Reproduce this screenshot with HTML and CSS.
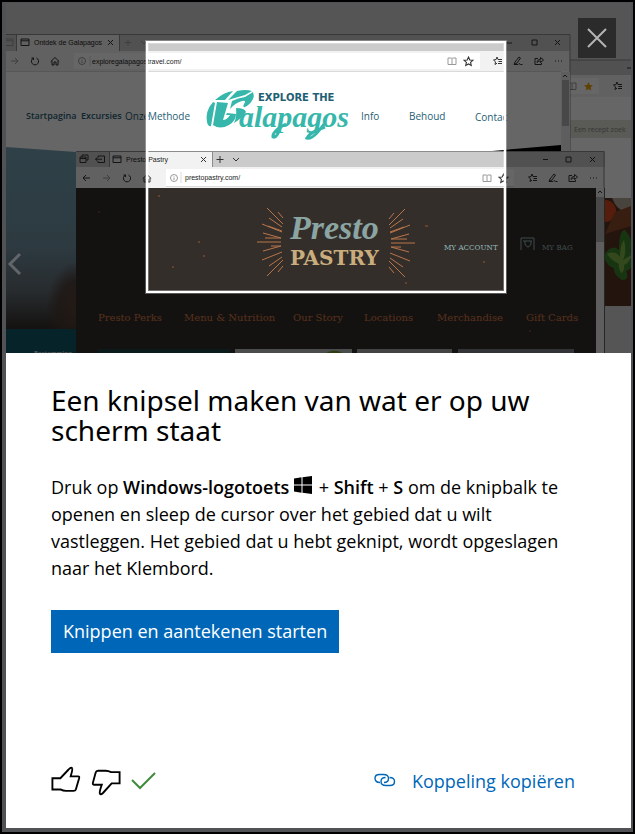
FILE: index.html
```
<!DOCTYPE html>
<html lang="nl">
<head>
  <meta charset="UTF-8" />
  <meta name="viewport" content="width=device-width, initial-scale=1.0"/>
  <title>Een knipsel maken</title>
  <link rel="stylesheet" href="styles.css">
</head>
<body>

<div class="dialog">
  <!-- Illustration -->
  <div class="hero">
    <svg class="hero-art" viewBox="6 3 625 350" role="img" aria-label="Schermknipsel van browservensters">
      <defs>
        <linearGradient id="sea" x1="0" y1="0" x2="0" y2="1">
          <stop offset="0" stop-color="#76a2b4"/>
          <stop offset=".55" stop-color="#7192a2"/>
          <stop offset=".8" stop-color="#626c73"/>
          <stop offset="1" stop-color="#342d29"/>
        </linearGradient>
        <radialGradient id="rock">
          <stop offset="0" stop-color="#5d4234"/>
          <stop offset=".6" stop-color="#4c3a32" stop-opacity=".8"/>
          <stop offset="1" stop-color="#4c3a32" stop-opacity="0"/>
        </radialGradient>
        <clipPath id="photo"><path d="M6 147L76 152V329H6z"/></clipPath>
        <clipPath id="food"><path d="M605 198h26v108h-26z"/></clipPath>
        <symbol id="star" viewBox="0 0 10 10"><path d="M5 1l1.200 2.600 2.800.300-2.100 1.900.600 2.800L5 7.200 2.500 8.600l.600-2.800L1 3.900l2.800-.300z"/></symbol>
        <symbol id="fav" viewBox="0 0 10 10"><path d="M4 1l1 2.500H9M4 1L3 3.600.500 4l2 1.800L2 8.500l2-1.300M5.500 5.500H9M5 7.500h4"/></symbol>
        <symbol id="pen" viewBox="0 0 10 10"><path d="M1 8.500L2 6l4-5 1.500 1-3.500 5zM1 8.500h4l1-1 1.500 1H9.500"/></symbol>
        <symbol id="share" viewBox="0 0 10 10"><path d="M4 2.500H1v6h6.500V7M3 6.500c0-2 1.500-3 3.500-3V1.500l3 2.500-3 2.500V5C5 5 4 5.500 3 6.500z"/></symbol>
        <symbol id="book" viewBox="0 0 10 10"><path d="M1 2h3.500l.500.500.500-.500H9v6.500H1zM5 2.500v6"/></symbol>
        <symbol id="page" viewBox="0 0 10 10"><path d="M1 2h8v6.500H1zM1 3.800h8"/></symbol>
        <symbol id="reload" viewBox="0 0 10 10"><path d="M3.500 2A3.600 3.600 0 1 0 6.500 2M3.500 2H1.500M3.500 2v2"/></symbol>
        <symbol id="home" viewBox="0 0 10 10"><path d="M.800 5.500L5 1.500l4.200 4M2 4.800V9h2V6h2v3h2V4.800"/></symbol>
        <symbol id="info" viewBox="0 0 10 10"><circle cx="5" cy="5" r="3.500"/><path d="M5 4.500V7M5 3v.600"/></symbol>
        <symbol id="windows" viewBox="0 0 10 10"><path d="M3 3V1h6v5H7M1 3h6v5.500H1zM1 4.500h6"/></symbol>
        <symbol id="aside" viewBox="0 0 10 10"><path d="M3 3.500V2h6.500v6.500H3V7M.500 5.200H7M2.500 3.500L.500 5.200 2.500 7"/></symbol>
      </defs>

      <path class="desk" d="M6 3h625v350H6z"/>

      <!-- Recipe window -->
      <path class="page" d="M560 60h71v293h-71z"/>
      <path class="titlebar" d="M560 60h71v15h-71z"/>
      <path class="toolbar" d="M560 75h71v22h-71z"/>
      <path class="field" d="M560 78h39v16h-39z"/>
      <path class="edge" d="M560 60h71"/>
      <path class="line" d="M627 68h4"/>
      <use class="line pale" href="#book" x="567" y="81" width="10" height="10"/>
      <use class="gold" href="#star" x="583" y="81" width="11" height="11"/>
      <use class="line" href="#fav" x="613" y="81" width="10" height="10"/>
      <path fill="#e0e0d8" d="M560 120h71v18h-71z"/>
      <text class="hint" x="574" y="132">Een recept zoek</text>
      <g clip-path="url(#food)">
        <path fill="#5a3423" d="M600 190h40v120h-40z"/>
        <circle cx="605" cy="211" r="11" fill="#d7481e"/>
        <path fill="#b5a89a" d="M612 198h19v10q-12 8-19-10z"/>
        <path fill="#8a4b2c" d="M615 212l16-6v20l-26 8z"/>
        <path fill="#3e842c" d="M604 255q8-12 15-5 0-20 6-20 9 10 5 22 5-4 6 5-5 14-10 14 4 9-4 9-9-6-8-12-8-2-10-13z"/>
        <path fill="#7fb54a" d="M607 254q8-4 13 3 0-12 4-17 3 12-1 20 6-4 9-5-4 9-8 10 1 6-3 8-3-5-2-9-8-4-12-10z"/>
      </g>
      <path fill="#d5d5d5" d="M605 306h26v47h-26z"/>

      <!-- Galapagos window -->
      <path class="page" d="M6 34h564v319H6z"/>
      <path class="titlebar" d="M6 34h564v17H6z"/>
      <path class="toolbar" d="M17 35h102v16H17zM6 51h564v20H6z"/>
      <path class="field" d="M74 53h406v16H74z"/>
      <path class="rule" d="M6 71.500h555M90 56v10"/>
      <path class="edge" d="M6 34.500h564v120M16.500 35v16M119.500 35v16"/>
      <use class="line pale" href="#info" x="77" y="56" width="10" height="10"/>
      <use class="line" href="#page" x="20" y="37" width="10" height="10"/>
      <use class="line pale" href="#page" x="4" y="37" width="10" height="10"/>
      <text class="ui" x="34" y="45">Ontdek de Galapagos</text>
      <path class="line" d="M108 40l5 5M113 40l-5 5M507 43h5M532 40h5v5h-5zM555 40l5 5M560 40l-5 5"/>
      <path class="line pale" d="M128 39.500v6M125 42.500h6M141 41l3 3 3-3M11 61h7M15 58l3 3-3 3"/>
      <use class="line" href="#reload" x="30" y="56" width="10" height="10"/>
      <use class="line" href="#home" x="50" y="56" width="10" height="10"/>
      <text class="ui" x="92" y="64">exploregalapagostravel.com/</text>
      <use class="line pale" href="#book" x="447" y="56" width="10" height="10"/>
      <use class="line" href="#star" x="463" y="56" width="11" height="11"/>
      <use class="line" href="#fav" x="493" y="56" width="10" height="10"/>
      <use class="line" href="#pen" x="513" y="56" width="10" height="10"/>
      <use class="line" href="#share" x="534" y="56" width="10" height="10"/>
      <path class="dots" d="M555 61h8"/>
      <path fill="#ececec" d="M561 72h9v79h-9z"/>
      <path fill="#b4b4b4" d="M562 80h7v46h-7z"/>
      <path class="line" d="M563 77l2-2 2 2"/>
      <path fill="#000" d="M492 151l69-6v6z"/>

      <g class="travel">
        <text class="strong" x="26" y="119">Startpagina</text>
        <text class="strong" x="81" y="119">Excursies</text>
        <text x="125" y="120">Onze</text>
        <text x="148" y="120">Methode</text>
        <text x="361" y="120">Info</text>
        <text x="409" y="120">Behoud</text>
        <text x="475" y="121">Contac</text>
      </g>

      <!-- Galapagos logo -->
      <g fill="#37b7ab">
        <path d="M213 102q-8 9-6 20 1 5 4 4l4-23zM217 102l-4 23q7 5 16 0 7-4 7-11l-9-1-1 2h4q-3 5-7 5l5-17zM215 100q9-8 18-9l-8 9zM237 91q9-2 15 0l-7 4-17 5zM245 97l8-5q3 7-6 14-5 3-3-2 3-4-2-3-7 2-12 8l2-8q6-3 13-4z"/>
        <path d="M236 108q9 0 10 4-5 7-12 11 3-6 2-15z"/>
      </g>
      <text class="explore" x="258" y="101">EXPLORE THE</text>
      <text class="galapagos" x="239" y="127">alapagos</text>
      <path class="swash" d="M286 124q-14 7-13 13 4 2 8-12M325 127q-15 5-18 11 6 2 17-14"/>

      <g clip-path="url(#photo)">
        <path fill="url(#sea)" d="M6 145h70v184H6z"/>
        <ellipse cx="78" cy="307" rx="32" ry="45" fill="url(#rock)"/>
      </g>
      <path fill="#12596a" d="M6 329h70v24H6z"/>
      <text class="book-label" x="34" y="355">Bestemming</text>

      <!-- Presto Pastry window -->
      <path class="bakery" d="M76 151h529v202H76z"/>
      <path class="titlebar" d="M76 151h529v16H76z"/>
      <path class="toolbar" d="M109 152h103v16H109zM76 167h529v21H76z"/>
      <path class="field" d="M166 169h348v17H166z"/>
      <path class="rule" d="M166 186.500h348M181 172v11"/>
      <path class="edge" d="M76 151.500h528V353M109.500 152v15M212.500 152v15"/>
      <use class="line" href="#windows" x="79" y="154" width="10" height="10"/>
      <use class="line" href="#aside" x="95" y="154" width="10" height="10"/>
      <use class="line" href="#page" x="112" y="154" width="10" height="10"/>
      <text class="ui" x="126" y="162">Presto Pastry</text>
      <path class="line" d="M201 157l5 5M206 157l-5 5M220 156v7M216.500 159.500h7M233 158l3 3 3-3M543 159.500h5M566 157h5v5h-5zM590 157l5 5M595 157l-5 5"/>
      <path class="line" d="M90 178h-7M86 175l-3 3 3 3"/>
      <path class="line pale" d="M103 178h7M107 175l3 3-3 3"/>
      <use class="line" href="#reload" x="122" y="173" width="10" height="10"/>
      <use class="line" href="#home" x="142" y="173" width="10" height="10"/>
      <use class="line pale" href="#info" x="169" y="173" width="10" height="10"/>
      <text class="ui" x="185" y="180">prestopastry.com/</text>
      <use class="line pale" href="#book" x="482" y="173" width="10" height="10"/>
      <use class="line" href="#star" x="498" y="173" width="11" height="11"/>
      <use class="line" href="#fav" x="528" y="173" width="10" height="10"/>
      <use class="line" href="#pen" x="548" y="173" width="10" height="10"/>
      <use class="line" href="#share" x="568" y="173" width="10" height="10"/>
      <path class="dots" d="M590 178h8"/>
      <path fill="#ececec" d="M596 188h8v165h-8z"/>
      <path fill="#b4b4b4" d="M596 197h8v45h-8z"/>
      <path class="line" d="M598 193l2-2 2 2"/>
      <path class="crumbs" d="M158 196h2M198 242h2M203 256h2M172 267h2M98 212h2M425 226h3M483 262h2M405 283h2M529 331h2"/>

      <!-- Presto logo -->
      <g id="rays">
        <path class="ray" d="M257 242h24M262 224l20 8M262 260l20-8M267 208l16 16M267 276l16-16M278 212l5 6M278 272l5-6M263 233l18 5M263 251l18-5M268 226l14 5M271 246h10M269 218l13 9M269 266l13-9M265 238h16"/>
      </g>
      <use href="#rays" transform="matrix(-1 0 0 1 672 1)"/>
      <text class="presto" x="290" y="239">Presto</text>
      <text class="pastry" x="290" y="265">PASTRY</text>
      <text class="account" x="444" y="250">MY ACCOUNT</text>
      <text class="account" x="542" y="250">MY BAG</text>
      <path class="bag" d="M521 238h13v12M521 238v12M523 241h9M525 241v3q3 6 6 0v-3"/>

      <g class="menu">
        <text x="98" y="321">Presto Perks</text>
        <text x="184" y="321">Menu &amp; Nutrition</text>
        <text x="293" y="321">Our Story</text>
        <text x="364" y="321">Locations</text>
        <text x="437" y="321">Merchandise</text>
        <text x="526" y="321">Gift Cards</text>
      </g>
      <path fill="#1c4444" d="M98 349h132v4H98z"/>
      <path fill="#b9bdbe" d="M235 349h117v4H235z"/>
      <path fill="#6f9c2c" d="M326 353q8-5 17 0z"/>
      <path fill="#a8a8a8" d="M357 349h95v4h-95z"/>
      <path fill="#7e8088" d="M458 349h116v4H458z"/>

      <!-- Dimmed screen with the selected area left clear -->
      <path class="dim" fill-rule="evenodd" d="M6 3h625v350H6zM147 42v250h358V42z"/>
      <path class="selection-glow" d="M147 42h358v250H147z"/>
      <path class="selection" d="M147 42h358v250H147z"/>
      <path class="previous" d="M20 254l-10 10 10 10"/>
    </svg>

    <button class="close" type="button" aria-label="Sluiten">
      <svg width="20" height="20" viewBox="0 0 20 20"><path d="M1 1l18 18M19 1L1 19"/></svg>
    </button>
  </div>

  <!-- Tip -->
  <div class="content">
    <h1>Een knipsel maken van wat er op uw scherm staat</h1>
    <p>Druk op <strong>Windows-logotoets</strong>
      <svg class="winlogo" width="18" height="18" viewBox="0 0 18 18" aria-hidden="true"><path d="M0 2.500L7.500 1.300V8.500H0zM8.500 1.200L18 0v8.500H8.500zM0 9.500h7.500v7.200L0 15.500zM8.500 9.500H18V18l-9.500-1.200z"/></svg>
      + <strong>Shift</strong> + <strong>S</strong> om de knipbalk te openen en sleep de cursor over het gebied dat u wilt vastleggen. Het gebied dat u hebt geknipt, wordt opgeslagen naar het Klembord.</p>
    <button class="btn" type="button">Knippen en aantekenen starten</button>

    <div class="footer">
      <div class="feedback">
        <button type="button" aria-label="Nuttig">
          <svg width="30" height="30" viewBox="0 0 32 32"><path d="M1.500 13H10l8.500-9q3-3.500 4-1.500.700 1-1 6.500l-.500 2h8q1.500 0 1 2l-3.500 12q-.500 1.500-2.500 1.500h-8q-3 0-6-1.500H1.500z"/></svg>
        </button>
        <button type="button" aria-label="Niet nuttig">
          <svg width="30" height="30" viewBox="0 0 32 32"><path d="M30.500 18.500H22L13.500 28q-3 3.500-4 1.500-.700-1 1-6.500l1-3h-8q-2 0-1.500-2L5 7q.500-2 2.500-2h8q3 0 6 1.500h9z"/></svg>
        </button>
        <svg class="check" width="26" height="20" viewBox="0 0 26 20" aria-hidden="true"><path d="M1 9l8 8L24 2"/></svg>
      </div>
      <a class="copy" href="#">
        <svg width="22" height="16" viewBox="0 0 22 16" aria-hidden="true"><path d="M6 9.500C3 9.500 1 7.700 1 5.200 1 2.800 3 1.500 5.500 1.500h4C12.500 1.500 14.500 3 14.500 5.500 14.500 8 12.500 9.500 10 9.500M15.500 4.500C18.500 4.500 20.500 6 20.500 8.500c0 2.800-2 4-4.500 4h-4C9 12.500 7 11 7 8.500c0-2.500 2-4 4.500-4"/></svg>
        <span>Koppeling kopiëren</span>
      </a>
    </div>
  </div>
</div>

</body>
</html>
```
FILE: styles.css
```
* {
  margin: 0;
  padding: 0;
  box-sizing: border-box;
}

body {
  font-family: 'Segoe UI', 'Open Sans', sans-serif;
  font-size: 18px;
  color: black;
}

.dialog {
  min-height: 100vh;
  display: flex;
  flex-direction: column;
  background: #505256;
  border: 2px solid black;
  padding: 1px 2px 4px 4px;
}

.hero {
  position: relative;
}

.hero-art {
  display: block;
  width: 100%;
}

.close {
  position: absolute;
  top: 15px;
  right: 15px;
  width: 38px;
  height: 40px;
  display: flex;
  align-items: center;
  justify-content: center;
  background: #2b2b2b;
  border: none;
  cursor: pointer;
}

.close path {
  stroke: #b4b4b4;
  stroke-width: 2;
}

/* Illustration */
.desk {
  fill: #d5d5d5;
}

.page,
.field {
  fill: white;
}

.titlebar {
  fill: #cbcbcb;
}

.toolbar {
  fill: #f2f2f2;
}

.bakery {
  fill: #342e2b;
}

.edge,
.rule,
.line,
.dots,
.bag {
  fill: none;
  stroke: #333;
  stroke-width: 1;
}

.edge {
  stroke: #8c8c8c;
}

.rule {
  stroke: #dadada;
}

.pale {
  stroke: #999;
}

.dots {
  stroke-dasharray: 1 2;
}

.gold {
  fill: #f0a30a;
}

.ui {
  font-family: 'Liberation Sans', sans-serif;
  font-size: 7px;
  fill: #222;
}

.hint {
  font-size: 7px;
  fill: #8a8a86;
}

.travel {
  font-size: 10px;
  fill: #1f6074;
}

.travel .strong {
  font-size: 9px;
  font-weight: 600;
}

.explore {
  font-family: 'DejaVu Sans', sans-serif;
  font-size: 10px;
  font-weight: bold;
  fill: #1f6074;
}

.galapagos {
  font-family: 'Liberation Serif', serif;
  font-size: 30px;
  font-style: italic;
  font-weight: bold;
  fill: #37b7ab;
}

.swash {
  fill: none;
  stroke: #37b7ab;
  stroke-width: 3;
}

.book-label {
  font-size: 6px;
  font-weight: bold;
  fill: #c8d4d6;
}

.crumbs {
  stroke: #9a5733;
  stroke-width: 1;
}

.ray {
  stroke: #b9754a;
  stroke-width: 1;
}

.presto {
  font-family: 'Liberation Serif', serif;
  font-size: 34px;
  font-style: italic;
  font-weight: bold;
  fill: #8ba5a3;
}

.pastry,
.menu {
  font-family: 'DejaVu Serif', serif;
}

.pastry {
  font-size: 20px;
  font-weight: bold;
  fill: #c9ad7c;
}

.account {
  font-family: 'DejaVu Serif Condensed', 'DejaVu Serif', serif;
  font-size: 8px;
  fill: #93b9b9;
}

.bag {
  stroke: #93b9b9;
}

.menu {
  font-size: 10px;
  fill: #d97a44;
}

.dim {
  fill: black;
  fill-opacity: 0.6;
}

.selection,
.selection-glow {
  fill: none;
  stroke: white;
  stroke-width: 2;
}

.selection-glow {
  stroke-width: 4;
  stroke-opacity: 0.3;
}

.previous {
  fill: none;
  stroke: #62666a;
  stroke-width: 3;
}

/* Tip text */
.content {
  flex: 1;
  display: flex;
  flex-direction: column;
  align-items: flex-start;
  background: white;
  padding: 32px 44px 32px 45px;
}

h1 {
  font-family: 'Segoe UI', 'Noto Sans', sans-serif;
  font-size: 28px;
  font-weight: normal;
  line-height: 30px;
}

p {
  margin-top: 29px;
  line-height: 27px;
}

strong {
  font-weight: 600;
}

.winlogo {
  margin-right: 2px;
}

.btn {
  margin-top: 28px;
  padding: 8px 12px;
  font: inherit;
  line-height: 27px;
  color: white;
  background: #0067b8;
  border: none;
  cursor: pointer;
}

.footer {
  width: 100%;
  margin-top: auto;
  display: flex;
  align-items: center;
  justify-content: space-between;
}

.feedback {
  display: flex;
  align-items: center;
  gap: 10px;
}

.feedback button {
  background: none;
  border: none;
  cursor: pointer;
}

.feedback svg {
  display: block;
  fill: none;
  stroke: black;
  stroke-width: 2;
}

.feedback .check {
  stroke: #3f8a3c;
}

.copy {
  margin-right: 12px;
  display: flex;
  align-items: center;
  gap: 16px;
  color: #0067b8;
  text-decoration: none;
}

.copy svg {
  fill: none;
  stroke: #0067b8;
  stroke-width: 1.4;
}
```
